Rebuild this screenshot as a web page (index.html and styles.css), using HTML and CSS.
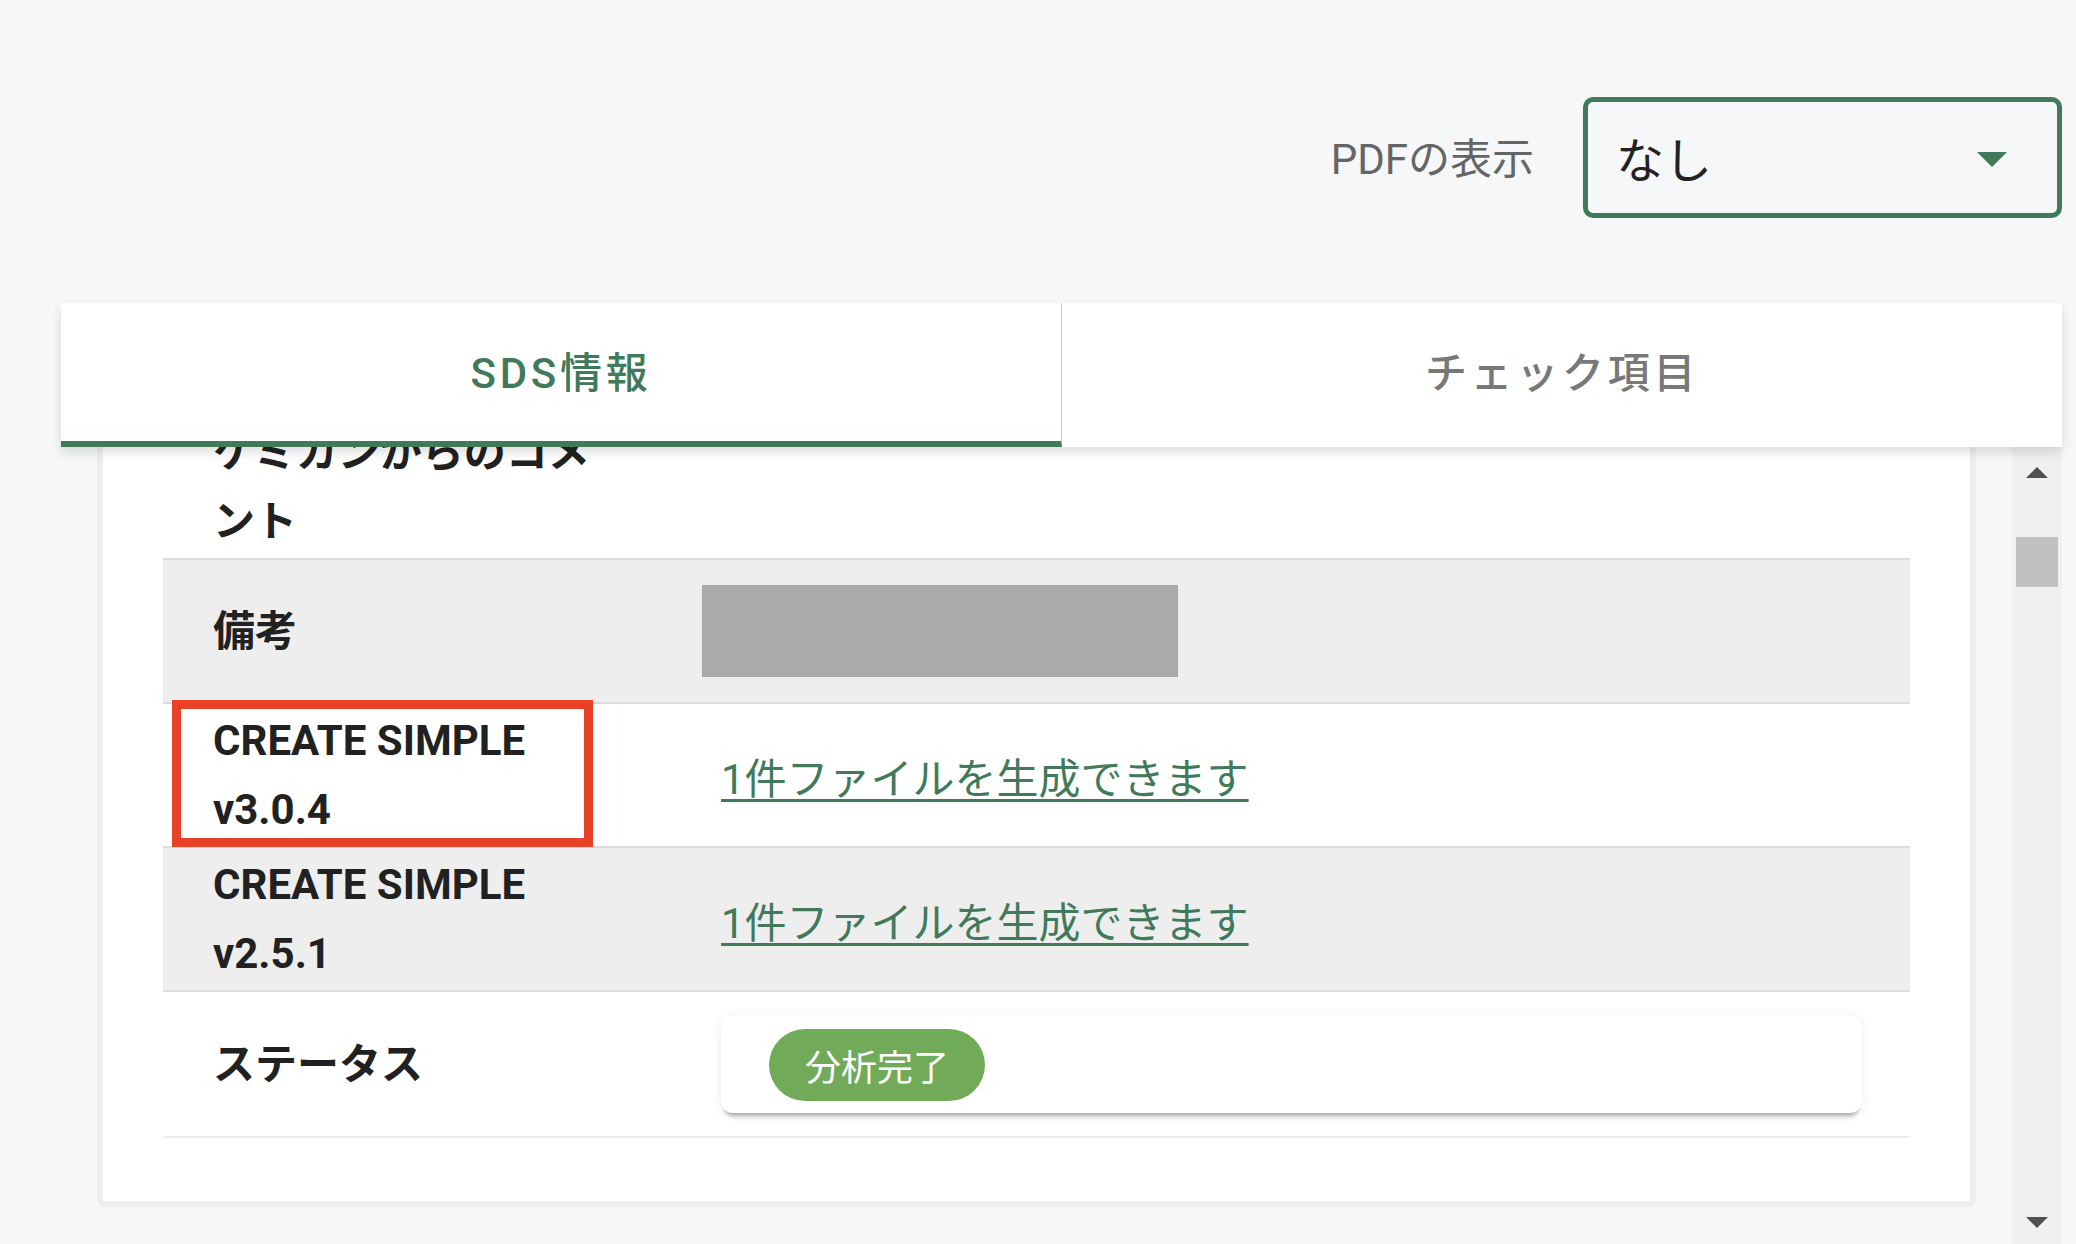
FILE: index.html
```html
<!DOCTYPE html>
<html lang="ja">
<head>
  <meta charset="UTF-8">
  <meta name="viewport" content="width=device-width, initial-scale=1.0">
  <title>SDS情報</title>
  <link rel="stylesheet" href="styles.css">
</head>
<body>
  <div class="page">
    <!-- PDF表示切替 -->
    <div class="toolbar">
      <span class="toolbar-label">PDFの表示</span>
      <div class="select">
        <span class="select-value">なし</span>
        <svg class="select-arrow" width="30" height="15" viewBox="0 0 30 15"><polygon points="0,0 30,0 15,15"/></svg>
      </div>
    </div>

    <!-- タブ -->
    <div class="panel">
      <div class="tabs">
        <div class="tab active">SDS情報</div>
        <div class="tab">チェック項目</div>
      </div>

      <div class="panel-body">
        <div class="scroll-area" id="scroll-area">
          <div class="card">
            <div class="info-row">
              <div class="info-label">ケミカンからのコメント</div>
              <div class="info-value"></div>
            </div>
            <div class="info-row striped">
              <div class="info-label">備考</div>
              <div class="info-value"><div class="redacted"></div></div>
            </div>
            <div class="info-row">
              <div class="info-label">CREATE SIMPLE v3.0.4</div>
              <div class="info-value"><a class="file-link" href="#">1件ファイルを生成できます</a></div>
              <div class="highlight"></div>
            </div>
            <div class="info-row striped">
              <div class="info-label">CREATE SIMPLE v2.5.1</div>
              <div class="info-value"><a class="file-link" href="#">1件ファイルを生成できます</a></div>
            </div>
            <div class="info-row last">
              <div class="info-label">ステータス</div>
              <div class="info-value">
                <div class="status-card"><span class="chip">分析完了</span></div>
              </div>
            </div>
          </div>
        </div>

        <!-- Scrollbar -->
        <div class="scrollbar">
          <div class="scroll-btn">
            <svg width="22" height="11" viewBox="0 0 22 11"><polygon points="11,0 22,11 0,11"/></svg>
          </div>
          <div class="scroll-thumb"></div>
          <div class="scroll-spacer"></div>
          <div class="scroll-btn bottom">
            <svg width="22" height="11" viewBox="0 0 22 11"><polygon points="0,0 22,0 11,11"/></svg>
          </div>
        </div>
      </div>
    </div>
  </div>

  <script>
    // keep the view scrolled as in the list
    document.getElementById("scroll-area").scrollTop = 133;
  </script>
</body>
</html>
```

FILE: styles.css
```css
/* General Styles */
html, body {
  margin: 0;
  padding: 0;
  height: 100%;
}

body {
  font-family: Roboto, "Noto Sans CJK JP", sans-serif;
  background-color: #f6f7f9;
  color: #212121;
  overflow: hidden;
}

.page {
  box-sizing: border-box;
  height: 100vh;
  padding: 0 14px 0 61px;
  display: flex;
  flex-direction: column;
}

/* Toolbar */
.toolbar {
  display: flex;
  justify-content: flex-end;
  align-items: center;
  gap: 49px;
  padding-top: 97px;
  margin-bottom: 85px;
}

.toolbar-label {
  font-size: 42px;
  color: #646566;
  margin-top: -4px;
}

.select {
  box-sizing: border-box;
  width: 479px;
  height: 121px;
  border: 5px solid #417a5b;
  border-radius: 10px;
  display: flex;
  align-items: center;
  justify-content: space-between;
  padding: 0 50px 0 28px;
}

.select-value {
  font-size: 48px;
  color: #222;
  margin-top: -2px;
}

.select-arrow {
  fill: #417a5b;
  margin-top: 3px;
}

/* Panel */
.panel {
  flex: 1;
  min-height: 0;
  display: flex;
  flex-direction: column;
}

.tabs {
  display: flex;
  height: 144px;
  background-color: #ffffff;
  box-shadow: 0 6px 10px rgba(0, 0, 0, 0.12);
  position: relative;
  z-index: 2;
}

.tab {
  flex: 1;
  box-sizing: border-box;
  display: flex;
  justify-content: center;
  align-items: center;
  padding-bottom: 5px;
  border-bottom: 6px solid transparent;
  font-size: 42px;
  font-weight: 500;
  letter-spacing: 3.7px;
  color: #787878;
}

.tab:first-child {
  border-right: 1px solid #cccccc;
}

.tab.active {
  color: #417a5b;
  border-bottom-color: #417a5b;
}

.panel-body {
  flex: 1;
  min-height: 0;
  display: flex;
}

.scroll-area {
  flex: 1;
  overflow: hidden;
  padding: 36px 36px 60px;
}

/* Card */
.card {
  background-color: #ffffff;
  border: 6px solid #eeeeee;
  border-radius: 8px;
  padding: 60px 60px 63px;
}

.info-row {
  position: relative;
  box-sizing: border-box;
  min-height: 144px;
  display: grid;
  grid-template-columns: 510px 1fr;
  align-items: center;
  border-bottom: 2px solid #dcdcdc;
}

.info-row.striped {
  background-color: #eeeeee;
}

.info-row.last {
  min-height: 146px;
  border-bottom-color: #ebebeb;
}

.info-label {
  padding: 2px 48px 2px 50px;
  font-size: 42px;
  font-weight: 700;
  line-height: 69px;
  color: #212121;
}

.info-value {
  padding: 0 48px;
}

.redacted {
  width: 476px;
  height: 92px;
  margin-left: -19px;
  background-color: #aaaaaa;
}

.file-link {
  font-size: 42px;
  color: #417a5b;
  text-decoration: underline;
  text-decoration-thickness: 3px;
  text-underline-offset: 5px;
}

.status-card {
  background-color: #ffffff;
  border-radius: 12px;
  padding: 14px 48px 12px;
  box-shadow: 0 7px 4px -4px rgba(0, 0, 0, 0.3), 0 2px 12px rgba(0, 0, 0, 0.08);
}

.chip {
  display: inline-flex;
  align-items: center;
  height: 72px;
  padding: 0 36px;
  border-radius: 36px;
  background-color: #71ab59;
  color: #ffffff;
  font-size: 36px;
  vertical-align: top;
}

/* annotation box */
.highlight {
  position: absolute;
  left: 9px;
  top: -4px;
  width: 421px;
  height: 147px;
  box-sizing: border-box;
  border: 9px solid #e94128;
}

/* Scrollbar */
.scrollbar {
  width: 50px;
  background-color: #f0f0f0;
  display: flex;
  flex-direction: column;
  align-items: center;
}

.scroll-btn {
  height: 50px;
  width: 100%;
  display: flex;
  justify-content: center;
  align-items: center;
  fill: #505050;
}

.scroll-btn.bottom {
  height: 44px;
}

.scroll-thumb {
  width: 42px;
  height: 50px;
  margin-top: 40px;
  background-color: #c1c1c1;
}

.scroll-spacer {
  flex: 1;
}
```
